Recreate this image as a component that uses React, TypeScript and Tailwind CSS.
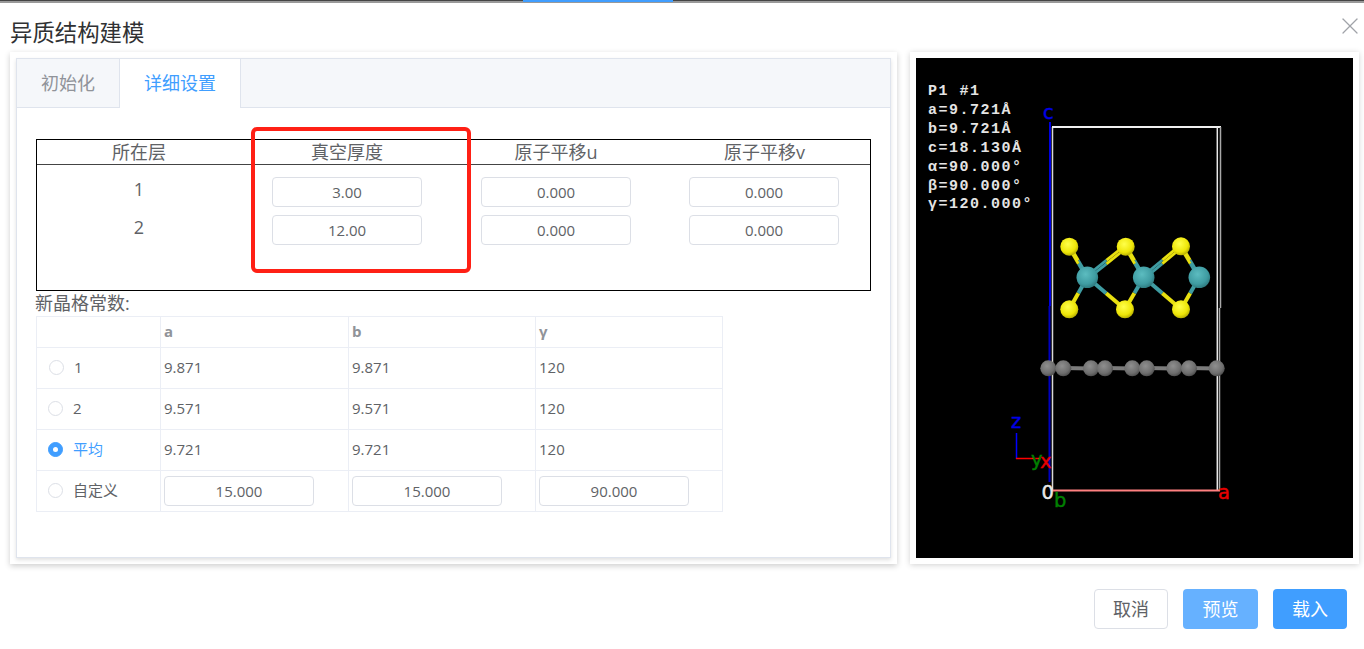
import { X } from "lucide-react";

const layers = [
  { name: "1", vacuum: "3.00", u: "0.000", v: "0.000" },
  { name: "2", vacuum: "12.00", u: "0.000", v: "0.000" },
];

const latticeRows = [
  { label: "1", a: "9.871", b: "9.871", c: "120", offset: true },
  { label: "2", a: "9.571", b: "9.571", c: "120" },
  { label: "平均", a: "9.721", b: "9.721", c: "120", checked: true },
];

const infoLines = ["P1 #1", "a=9.721Å", "b=9.721Å", "c=18.130Å", "α=90.000°", "β=90.000°", "γ=120.000°"];

const carbons = [1048.3, 1063.3, 1091, 1105, 1132.3, 1146.7, 1174.3, 1189, 1216.7];
const metals = [
  [1087.3, 277.3],
  [1143.7, 277.3],
  [1199.3, 277.3],
];
const sulfurs = [
  [1069.3, 246.7],
  [1125.7, 246.7],
  [1181, 246.3],
  [1069.3, 309.3],
  [1125, 309.3],
  [1181, 309.3],
];
const bonds = [
  [0, 0],
  [0, 1],
  [0, 3],
  [0, 4],
  [1, 1],
  [1, 2],
  [1, 4],
  [1, 5],
  [2, 2],
  [2, 5],
];

function NumberInput({ value }: { value: string }) {
  return (
    <div className="w-[150px] h-[30px] border border-[#dcdfe6] rounded bg-white text-[15px] leading-[28px] text-center text-[#606266]">
      {value}
    </div>
  );
}

function Radio({ checked, className }: { checked?: boolean; className?: string }) {
  return (
    <span
      className={`w-[15px] h-[15px] rounded-full border flex items-center justify-center shrink-0 ${
        checked ? "bg-[#409eff] border-[#409eff]" : "bg-white border-[#dcdfe6]"
      } ${className ?? ""}`}
    >
      {checked && <span className="w-[5px] h-[5px] rounded-full bg-white" />}
    </span>
  );
}

function Structure() {
  return (
    <svg viewBox="916 58 437 500" className="w-[437px] h-[500px] block">
      <defs>
        <radialGradient id="yellow" cx="42%" cy="36%" r="70%">
          <stop offset="0%" stopColor="#ffff4a" />
          <stop offset="65%" stopColor="#eee608" />
          <stop offset="100%" stopColor="#a8a000" />
        </radialGradient>
        <radialGradient id="teal" cx="42%" cy="36%" r="70%">
          <stop offset="0%" stopColor="#5cbcc0" />
          <stop offset="65%" stopColor="#3f9ca2" />
          <stop offset="100%" stopColor="#2a7277" />
        </radialGradient>
        <radialGradient id="gray" cx="42%" cy="36%" r="70%">
          <stop offset="0%" stopColor="#8f8f8f" />
          <stop offset="65%" stopColor="#6e6e6e" />
          <stop offset="100%" stopColor="#454545" />
        </radialGradient>
      </defs>

      {infoLines.map((line, i) => (
        <text
          key={line}
          x="928"
          y={95 + i * 18.9}
          fill="#e4e4e4"
          fontSize="15"
          fontWeight="700"
          letterSpacing="1.5"
          fontFamily="'Liberation Mono', monospace"
        >
          {line}
        </text>
      ))}

      <line x1="1050" y1="122" x2="1050" y2="306" stroke="#0000e0" strokeWidth="2" />
      <line x1="1049.5" y1="306" x2="1049.5" y2="482" stroke="#0000c0" strokeWidth="2" />
      <line x1="1052.5" y1="127" x2="1052.5" y2="490" stroke="#d8d8d8" strokeWidth="1.5" />
      <line x1="1052" y1="127" x2="1221" y2="127" stroke="#f0f0f0" strokeWidth="2" />
      <line x1="1217.3" y1="127" x2="1217.3" y2="490" stroke="#e8e8e8" strokeWidth="1.5" />
      <line x1="1220.5" y1="127" x2="1220.5" y2="308" stroke="#a8a8a8" strokeWidth="1.5" />
      <line x1="1219.5" y1="308" x2="1219.5" y2="490" stroke="#a8a8a8" strokeWidth="1.5" />
      <line x1="1052" y1="490.5" x2="1220" y2="490.5" stroke="#ff8080" strokeWidth="2" />

      {carbons.slice(1).map((x, i) => (
        <line key={x} x1={carbons[i]} y1="368" x2={x} y2="368.5" stroke="#7c7c7c" strokeWidth="4" />
      ))}
      {carbons.map((x) => (
        <circle key={x} cx={x} cy="368.3" r="8" fill="url(#gray)" />
      ))}

      {bonds.map(([m, s]) => {
        const [mx, my] = metals[m];
        const [sx, sy] = sulfurs[s];
        const midX = (mx + sx) / 2;
        const midY = (my + sy) / 2;
        const upper = sy < my;
        const dy = upper ? 1.8 : 0;
        return (
          <g key={`${m}-${s}`} strokeWidth={upper ? 2.8 : 4}>
            <line x1={mx} y1={my - dy} x2={midX} y2={midY - dy} stroke="#3f9ca2" />
            <line x1={midX} y1={midY - dy} x2={sx} y2={sy - dy} stroke="#e8e010" />
            {upper && <line x1={mx} y1={my + dy} x2={midX} y2={midY + dy} stroke="#3f9ca2" />}
            {upper && <line x1={midX} y1={midY + dy} x2={sx} y2={sy + dy} stroke="#e8e010" />}
          </g>
        );
      })}
      {sulfurs.map(([x, y]) => (
        <circle key={`${x}-${y}`} cx={x} cy={y} r="9" fill="url(#yellow)" />
      ))}
      {metals.map(([x, y]) => (
        <circle key={x} cx={x} cy={y} r="10.8" fill="url(#teal)" />
      ))}

      <line x1="1016.5" y1="433" x2="1016.5" y2="459" stroke="#0000ff" strokeWidth="1.5" />
      <line x1="1016" y1="458.5" x2="1041" y2="458.5" stroke="#ff0000" strokeWidth="1.5" />

      <g fontFamily="'DejaVu Sans', sans-serif" fontSize="19.5" strokeWidth="0.4">
        <text x="1043" y="119" fill="#0000e8" stroke="#0000e8">c</text>
        <text x="1011" y="428" fill="#0000e8" stroke="#0000e8">z</text>
        <text x="1031" y="466" fill="#008000" stroke="#008000">y</text>
        <text x="1040" y="468" fill="#e80000" stroke="#e80000">x</text>
        <text x="1041.5" y="499.3" fill="#e8e8e8" stroke="#e8e8e8">0</text>
        <text x="1054" y="506.7" fill="#008000" stroke="#008000">b</text>
        <text x="1218" y="499" fill="#e80000" stroke="#e80000">a</text>
      </g>
    </svg>
  );
}

export default function App() {
  return (
    <div className="relative w-[1364px] h-[649px] overflow-hidden bg-white [font-family:'Open_Sans','Noto_Sans_CJK_SC',sans-serif]">
      <div className="h-[3px] bg-[#999999]">
        <div className="h-px bg-[#444444]">
          <div className="ml-[523px] w-[150px] h-[2px] bg-[#409eff]" />
        </div>
      </div>

      <div className="h-[49px] pl-[10px] pt-[13px] text-[22.4px] leading-[34px] text-[#303133]">异质结构建模</div>
      <X className="absolute top-[12px] left-[1336px] w-[28px] h-[28px] text-[#a0a3a9]" strokeWidth={1.1} />

      <div className="flex pl-[10px] gap-[13px]">
        <div className="w-[887px] h-[512px] p-[6px] bg-white shadow-[0_2px_6px_rgba(0,0,0,0.2)]">
          <div className="h-[500px] border border-[#dfe4ed] bg-white shadow-[0_2px_4px_rgba(0,0,0,0.12)]">
            <div className="h-[49px] bg-[#f5f7fa] border-b border-[#dfe4ed] flex text-[18px]">
              <div className="w-[103px] h-[48px] pt-px flex items-center justify-center border-r border-[#dfe4ed] text-[#909399]">初始化</div>
              <div className="w-[121px] h-[49px] flex items-center justify-center bg-white border-r border-[#dfe4ed] text-[#409eff]">详细设置</div>
            </div>

            <div className="pl-[19px] pt-[31px]">
              <div className="w-[835px] h-[152px] border border-black text-[18px] text-[#606266]">
                <div className="grid grid-cols-[204px_212px_206px_211px] h-[25px] border-b border-[#444] leading-[24px] text-center">
                  <div>所在层</div>
                  <div>真空厚度</div>
                  <div>原子平移u</div>
                  <div>原子平移v</div>
                </div>
                <div className="pt-[12px] flex flex-col gap-[8px]">
                  {layers.map((row) => (
                    <div key={row.name} className="grid grid-cols-[204px_212px_206px_210px] justify-items-center leading-[24px]">
                      <div>{row.name}</div>
                      <NumberInput value={row.vacuum} />
                      <NumberInput value={row.u} />
                      <NumberInput value={row.v} />
                    </div>
                  ))}
                </div>
              </div>

              <div className="h-[25px] -ml-px text-[18px] leading-[25px] text-[#606266]">新晶格常数:</div>

              <table className="w-[686px] table-fixed border-collapse text-[15px] text-[#606266]">
                <colgroup>
                  <col className="w-[124px]" />
                  <col className="w-[188px]" />
                  <col className="w-[187px]" />
                  <col className="w-[187px]" />
                </colgroup>
                <tbody>
                  <tr className="h-[31px] text-[#909399] font-bold">
                    <td className="border border-[#ebeef5]" />
                    <td className="border border-[#ebeef5] px-[3px] pb-[2px]">a</td>
                    <td className="border border-[#ebeef5] px-[3px] pb-[2px]">b</td>
                    <td className="border border-[#ebeef5] px-[3px] pb-[2px]">γ</td>
                  </tr>
                  {latticeRows.map((row) => (
                    <tr key={row.label} className="h-[41px]">
                      <td className="border border-[#ebeef5] pl-[11px] pb-[2px]">
                        <div className={`flex items-center gap-[10px] ${row.checked ? "text-[#409eff]" : ""}`}>
                          <Radio checked={row.checked} className={row.offset ? "ml-px" : ""} />
                          {row.label}
                        </div>
                      </td>
                      <td className="border border-[#ebeef5] px-[3px] pb-[2px]">{row.a}</td>
                      <td className="border border-[#ebeef5] px-[3px] pb-[2px]">{row.b}</td>
                      <td className="border border-[#ebeef5] px-[3px] pb-[2px]">{row.c}</td>
                    </tr>
                  ))}
                  <tr className="h-[41px]">
                    <td className="border border-[#ebeef5] pl-[11px] pb-[2px]">
                      <div className="flex items-center gap-[10px]">
                        <Radio />
                        自定义
                      </div>
                    </td>
                    <td className="border border-[#ebeef5] px-[3px]"><NumberInput value="15.000" /></td>
                    <td className="border border-[#ebeef5] px-[3px]"><NumberInput value="15.000" /></td>
                    <td className="border border-[#ebeef5] px-[3px]"><NumberInput value="90.000" /></td>
                  </tr>
                </tbody>
              </table>
            </div>
          </div>
        </div>

        <div className="w-[449px] h-[512px] p-[6px] bg-white shadow-[0_1px_6px_rgba(0,0,0,0.18)]">
          <div className="bg-black">
            <Structure />
          </div>
        </div>
      </div>

      <div className="flex justify-end gap-[15px] pr-[17px] pt-[25px] text-[18px]">
        <div className="w-[74px] h-[40px] flex items-center justify-center rounded border border-[#dcdfe6] text-[#606266]">取消</div>
        <div className="w-[75px] h-[40px] flex items-center justify-center rounded bg-[#66b1ff] text-white">预览</div>
        <div className="w-[74px] h-[40px] flex items-center justify-center rounded bg-[#409eff] text-white">载入</div>
      </div>

      <div className="absolute left-[251px] top-[127px] w-[220px] h-[146px] rounded-md border-[4px] border-[#ff2015]" />
    </div>
  );
}
